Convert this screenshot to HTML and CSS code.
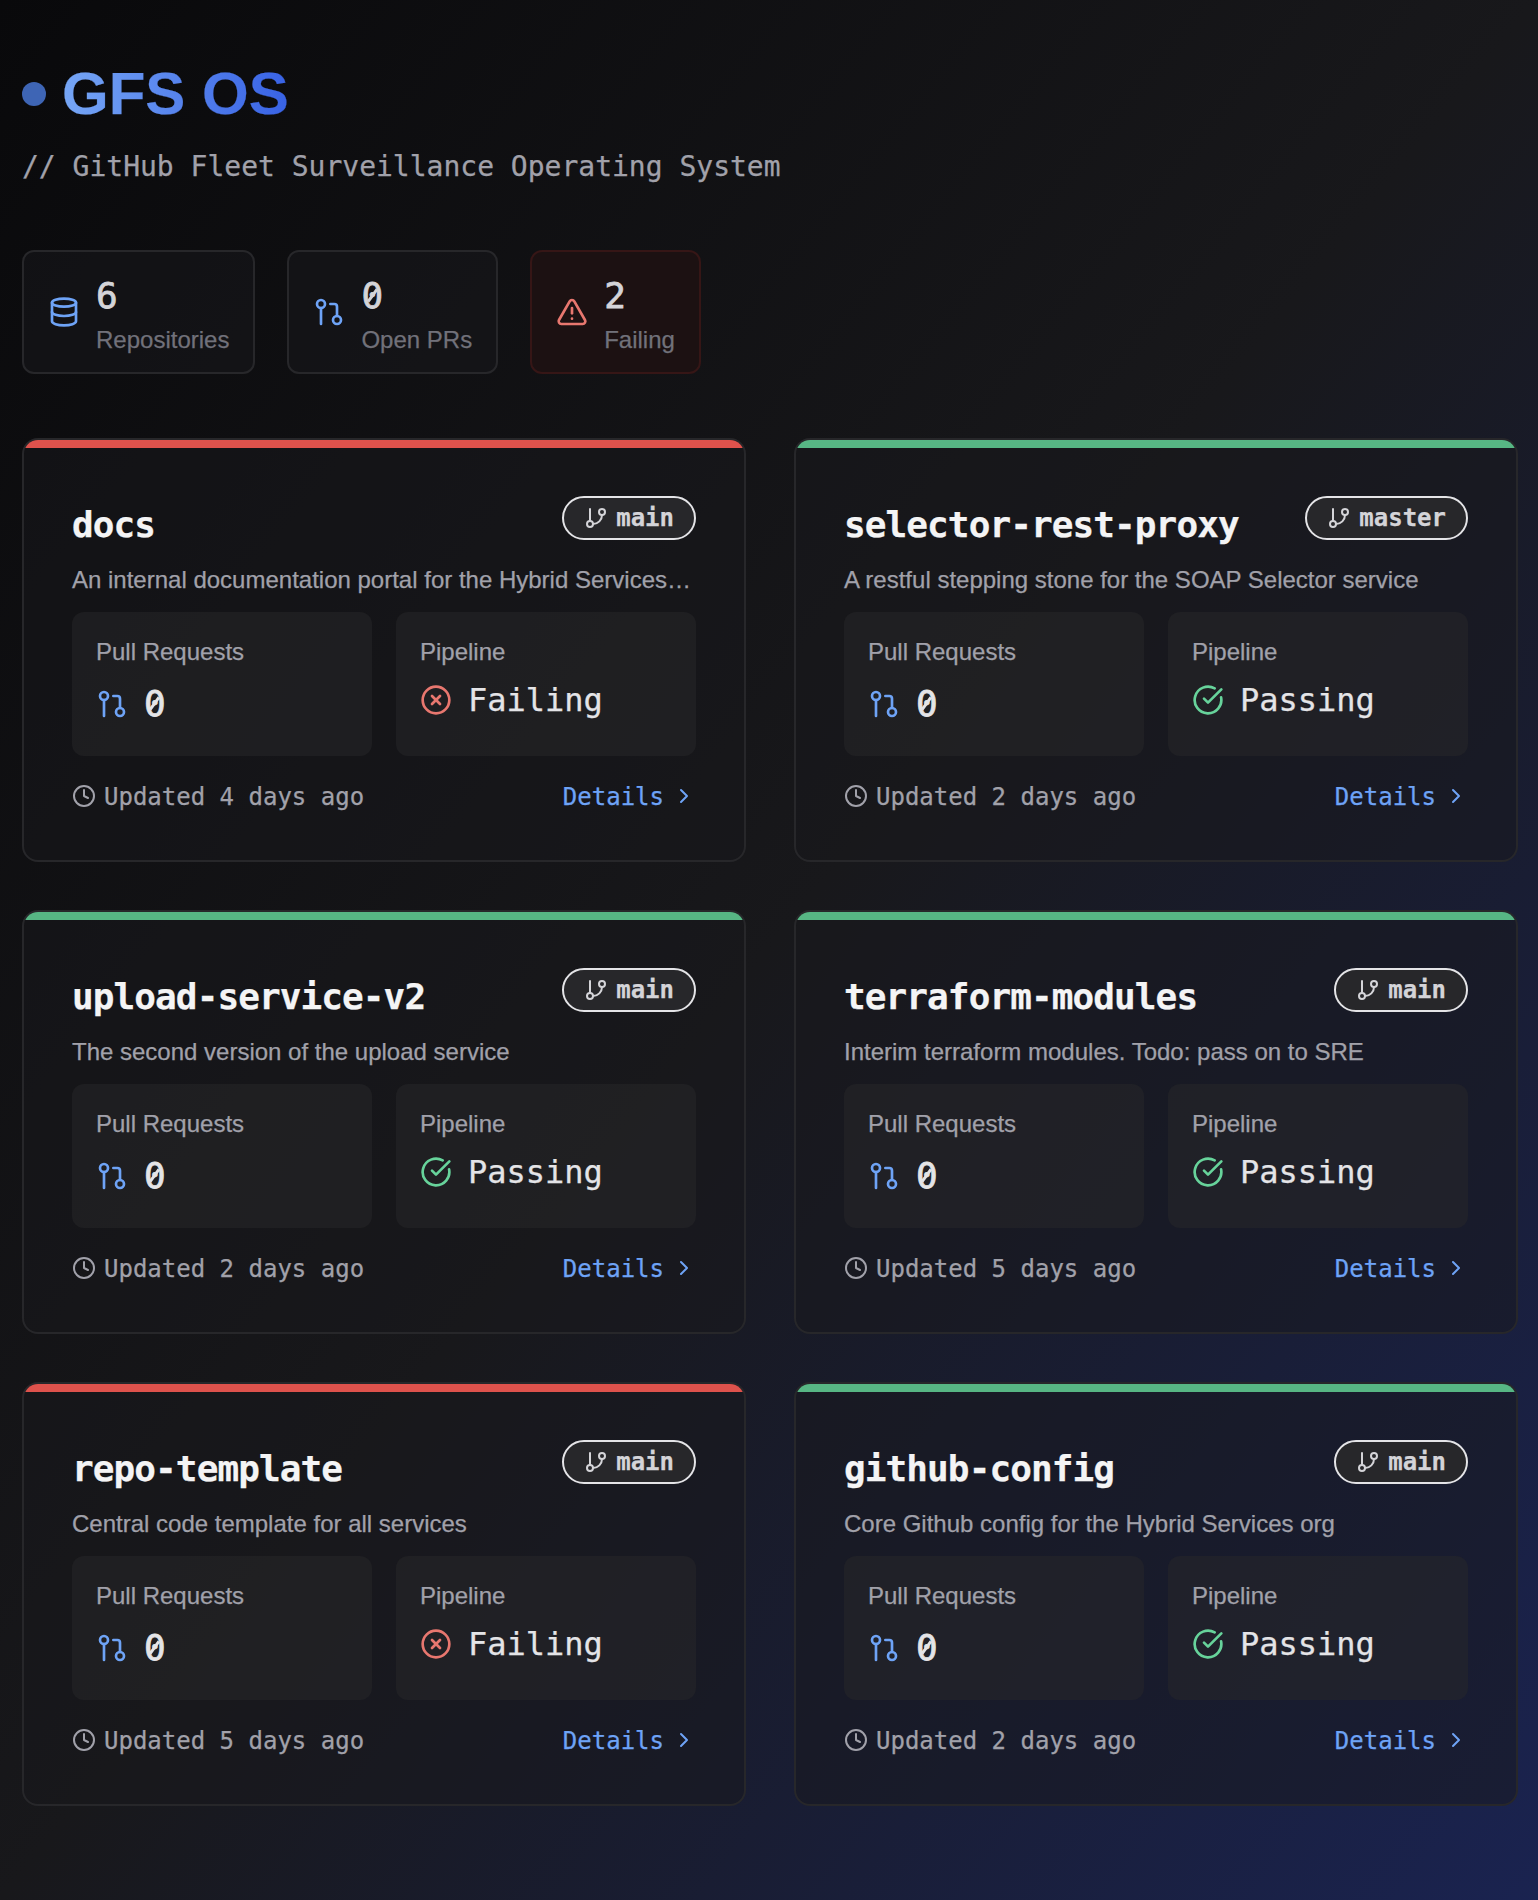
FILE: index.html
```html
<!DOCTYPE html>
<html lang="en">
<head>
<meta charset="utf-8">
<title>GFS OS</title>
<link rel="stylesheet" href="styles.css">
</head>
<body>
<svg class="sprite" aria-hidden="true">
  <symbol id="database" viewBox="0 0 24 24"><ellipse cx="12" cy="5" rx="9" ry="3"/><path d="M3 5v14a9 3 0 0 0 18 0V5"/><path d="M3 12a9 3 0 0 0 18 0"/></symbol>
  <symbol id="pr" viewBox="0 0 24 24"><circle cx="18" cy="18" r="3"/><circle cx="6" cy="6" r="3"/><path d="M13 6h3a2 2 0 0 1 2 2v7"/><path d="M6 9v12"/></symbol>
  <symbol id="alert" viewBox="0 0 24 24"><path d="m21.73 18-8-14a2 2 0 0 0-3.48 0l-8 14A2 2 0 0 0 4 21h16a2 2 0 0 0 1.73-3"/><path d="M12 9v4"/><path d="M12 17h.01"/></symbol>
  <symbol id="branch" viewBox="0 0 24 24"><path d="M6 3v12"/><circle cx="18" cy="6" r="3"/><circle cx="6" cy="18" r="3"/><path d="M18 9a9 9 0 0 1-9 9"/></symbol>
  <symbol id="fail" viewBox="0 0 24 24"><circle cx="12" cy="12" r="10"/><path d="m15 9-6 6"/><path d="m9 9 6 6"/></symbol>
  <symbol id="pass" viewBox="0 0 24 24"><path d="M21.801 10A10 10 0 1 1 17 3.335"/><path d="m9 11 3 3L22 4"/></symbol>
  <symbol id="clock" viewBox="0 0 24 24"><circle cx="12" cy="12" r="10"/><path d="M12 6v6l4 2"/></symbol>
  <symbol id="chevron" viewBox="0 0 24 24"><path d="m9 18 6-6-6-6"/></symbol>
</svg>
<main class="page">
  <header class="header">
    <div class="brand"><span class="pulse"></span><h1 class="brand-name">GFS OS</h1></div>
    <p class="tagline">// GitHub Fleet Surveillance Operating System</p>
  </header>

  <section class="stats">
    <div class="stat">
      <svg class="icon icon-blue"><use href="#database"/></svg>
      <div><div class="stat-value">6</div><div class="stat-label">Repositories</div></div>
    </div>
    <div class="stat">
      <svg class="icon icon-blue"><use href="#pr"/></svg>
      <div><div class="stat-value"><span class="zero">0</span></div><div class="stat-label">Open PRs</div></div>
    </div>
    <div class="stat stat-alert">
      <svg class="icon icon-red"><use href="#alert"/></svg>
      <div><div class="stat-value">2</div><div class="stat-label">Failing</div></div>
    </div>
  </section>

  <section class="grid">
    <article class="card card-fail">
      <div class="card-head"><h2 class="repo">docs</h2><span class="badge"><svg class="icon icon-sm"><use href="#branch"/></svg>main</span></div>
      <p class="desc">An internal documentation portal for the Hybrid Services…</p>
      <div class="panels">
        <div class="panel"><div class="panel-label">Pull Requests</div><div class="count"><svg class="icon icon-blue"><use href="#pr"/></svg><span class="zero">0</span></div></div>
        <div class="panel"><div class="panel-label">Pipeline</div><div class="status"><svg class="icon icon-red"><use href="#fail"/></svg>Failing</div></div>
      </div>
      <div class="card-foot"><span class="updated"><svg class="icon icon-sm"><use href="#clock"/></svg>Updated 4 days ago</span><a class="details">Details<svg class="icon icon-sm"><use href="#chevron"/></svg></a></div>
    </article>

    <article class="card card-pass">
      <div class="card-head"><h2 class="repo">selector-rest-proxy</h2><span class="badge"><svg class="icon icon-sm"><use href="#branch"/></svg>master</span></div>
      <p class="desc">A restful stepping stone for the SOAP Selector service</p>
      <div class="panels">
        <div class="panel"><div class="panel-label">Pull Requests</div><div class="count"><svg class="icon icon-blue"><use href="#pr"/></svg><span class="zero">0</span></div></div>
        <div class="panel"><div class="panel-label">Pipeline</div><div class="status"><svg class="icon icon-green"><use href="#pass"/></svg>Passing</div></div>
      </div>
      <div class="card-foot"><span class="updated"><svg class="icon icon-sm"><use href="#clock"/></svg>Updated 2 days ago</span><a class="details">Details<svg class="icon icon-sm"><use href="#chevron"/></svg></a></div>
    </article>

    <article class="card card-pass">
      <div class="card-head"><h2 class="repo">upload-service-v2</h2><span class="badge"><svg class="icon icon-sm"><use href="#branch"/></svg>main</span></div>
      <p class="desc">The second version of the upload service</p>
      <div class="panels">
        <div class="panel"><div class="panel-label">Pull Requests</div><div class="count"><svg class="icon icon-blue"><use href="#pr"/></svg><span class="zero">0</span></div></div>
        <div class="panel"><div class="panel-label">Pipeline</div><div class="status"><svg class="icon icon-green"><use href="#pass"/></svg>Passing</div></div>
      </div>
      <div class="card-foot"><span class="updated"><svg class="icon icon-sm"><use href="#clock"/></svg>Updated 2 days ago</span><a class="details">Details<svg class="icon icon-sm"><use href="#chevron"/></svg></a></div>
    </article>

    <article class="card card-pass">
      <div class="card-head"><h2 class="repo">terraform-modules</h2><span class="badge"><svg class="icon icon-sm"><use href="#branch"/></svg>main</span></div>
      <p class="desc">Interim terraform modules. Todo: pass on to SRE</p>
      <div class="panels">
        <div class="panel"><div class="panel-label">Pull Requests</div><div class="count"><svg class="icon icon-blue"><use href="#pr"/></svg><span class="zero">0</span></div></div>
        <div class="panel"><div class="panel-label">Pipeline</div><div class="status"><svg class="icon icon-green"><use href="#pass"/></svg>Passing</div></div>
      </div>
      <div class="card-foot"><span class="updated"><svg class="icon icon-sm"><use href="#clock"/></svg>Updated 5 days ago</span><a class="details">Details<svg class="icon icon-sm"><use href="#chevron"/></svg></a></div>
    </article>

    <article class="card card-fail">
      <div class="card-head"><h2 class="repo">repo-template</h2><span class="badge"><svg class="icon icon-sm"><use href="#branch"/></svg>main</span></div>
      <p class="desc">Central code template for all services</p>
      <div class="panels">
        <div class="panel"><div class="panel-label">Pull Requests</div><div class="count"><svg class="icon icon-blue"><use href="#pr"/></svg><span class="zero">0</span></div></div>
        <div class="panel"><div class="panel-label">Pipeline</div><div class="status"><svg class="icon icon-red"><use href="#fail"/></svg>Failing</div></div>
      </div>
      <div class="card-foot"><span class="updated"><svg class="icon icon-sm"><use href="#clock"/></svg>Updated 5 days ago</span><a class="details">Details<svg class="icon icon-sm"><use href="#chevron"/></svg></a></div>
    </article>

    <article class="card card-pass">
      <div class="card-head"><h2 class="repo">github-config</h2><span class="badge"><svg class="icon icon-sm"><use href="#branch"/></svg>main</span></div>
      <p class="desc">Core Github config for the Hybrid Services org</p>
      <div class="panels">
        <div class="panel"><div class="panel-label">Pull Requests</div><div class="count"><svg class="icon icon-blue"><use href="#pr"/></svg><span class="zero">0</span></div></div>
        <div class="panel"><div class="panel-label">Pipeline</div><div class="status"><svg class="icon icon-green"><use href="#pass"/></svg>Passing</div></div>
      </div>
      <div class="card-foot"><span class="updated"><svg class="icon icon-sm"><use href="#clock"/></svg>Updated 2 days ago</span><a class="details">Details<svg class="icon icon-sm"><use href="#chevron"/></svg></a></div>
    </article>
  </section>
</main>
</body>
</html>
```
FILE: styles.css
```css
*, *::before { box-sizing: border-box; }

body {
  margin: 0;
  font: 24px/32px "Liberation Sans", Arial, sans-serif;
  color: #e4e4e7;
  background: #09090b;
  -webkit-text-stroke: 0.25px currentColor;
}

h1, h2, p { margin: 0; }

.sprite { display: none; }

.page {
  min-height: 1900px;
  padding: 58px 20px 94px 22px;
  background: linear-gradient(to bottom right, #09090b, #18181b 50%, #1a2350);
}

.icon {
  display: block;
  flex: none;
  width: 32px;
  height: 32px;
  fill: none;
  stroke: currentColor;
  stroke-width: 2;
  stroke-linecap: round;
  stroke-linejoin: round;
}
.icon-sm { width: 24px; height: 24px; }
.icon-blue { color: #6ea3f6; }
.icon-red { color: #e8776f; }
.icon-green { color: #67d39b; }

.brand { display: flex; align-items: center; gap: 16px; height: 72px; }
.pulse { width: 24px; height: 24px; border-radius: 50%; background: #3e65b5; }
.brand-name {
  font-size: 60px;
  line-height: 72px;
  font-weight: 700;
  color: transparent;
  background: linear-gradient(to right, #76a6f5, #3862e5);
  background-clip: text;
  -webkit-background-clip: text;
}
.tagline {
  padding-top: 17px;
  height: 56px;
  font: 28px/40px "DejaVu Sans Mono", monospace;
  color: #a1a1aa;
}

.stats { display: flex; gap: 32px; margin-top: 64px; }
.stat {
  display: flex;
  align-items: center;
  gap: 16px;
  height: 124px;
  padding: 0 24px;
  border: 2px solid #27272a;
  border-radius: 12px;
  background: rgba(24, 24, 27, 0.5);
}
.stat-alert { border-color: #361616; background: #1c1112; }
.stat-value {
  font: 36px/56px "DejaVu Sans Mono", monospace;
  color: #d4d4d8;
  -webkit-text-stroke-width: 0.8px;
}
.stat-label { color: #71717a; }

/* Slashed zero */
.zero { position: relative; display: inline-block; }
.zero::after {
  content: "";
  position: absolute;
  left: 50%;
  top: 50%;
  width: 15px;
  height: 3px;
  margin: -2px 0 0 -7.5px;
  background: currentColor;
  transform: rotate(-54deg);
}

.grid {
  display: grid;
  grid-template-columns: 1fr 1fr;
  gap: 48px;
  margin-top: 64px;
}
.card {
  position: relative;
  display: flex;
  flex-direction: column;
  min-width: 0;
  height: 424px;
  padding: 56px 48px 48px;
  border: 2px solid #27272a;
  border-radius: 16px;
  background: rgba(24, 24, 27, 0.5);
  overflow: hidden;
}
.card::before {
  content: "";
  position: absolute;
  inset: 0 0 auto;
  height: 8px;
}
.card-fail::before { background: #de524c; }
.card-pass::before { background: #57b684; }

.card-head { display: flex; justify-content: space-between; align-items: flex-start; height: 60px; }
.repo {
  padding-top: 5px;
  font: 700 36px/48px "DejaVu Sans Mono", monospace;
  letter-spacing: -0.9px;
  color: #f4f4f5;
}
.badge {
  display: flex;
  align-items: center;
  gap: 8px;
  height: 44px;
  padding: 0 20px;
  border: 2px solid #e4e4e7;
  border-radius: 22px;
  background: #27272a;
  font: 700 24px/34px "DejaVu Sans Mono", monospace;
  color: #d4d4d8;
}
.desc {
  height: 56px;
  padding-top: 8px;
  line-height: 32px;
  color: #a1a1aa;
  white-space: nowrap;
}
.panels { display: grid; grid-template-columns: 1fr 1fr; gap: 24px; }
.panel {
  height: 144px;
  padding: 24px;
  border-radius: 12px;
  background: rgba(39, 39, 42, 0.5);
}
.panel-label { margin-bottom: 16px; color: #a1a1aa; }
.count, .status {
  display: flex;
  align-items: center;
  gap: 16px;
  font-family: "DejaVu Sans Mono", monospace;
}
.count { font-size: 36px; line-height: 40px; -webkit-text-stroke-width: 0.8px; }
.status { font-size: 32px; line-height: 32px; }

.card-foot {
  display: flex;
  justify-content: space-between;
  height: 32px;
  margin-top: 24px;
  font: 24px/34px "DejaVu Sans Mono", monospace;
}
.card-foot .icon { margin-bottom: 2px; }
.updated, .details { display: flex; align-items: center; gap: 8px; height: 34px; }
.updated { color: #a1a1aa; }
.details { color: #6ea3f6; }
```
